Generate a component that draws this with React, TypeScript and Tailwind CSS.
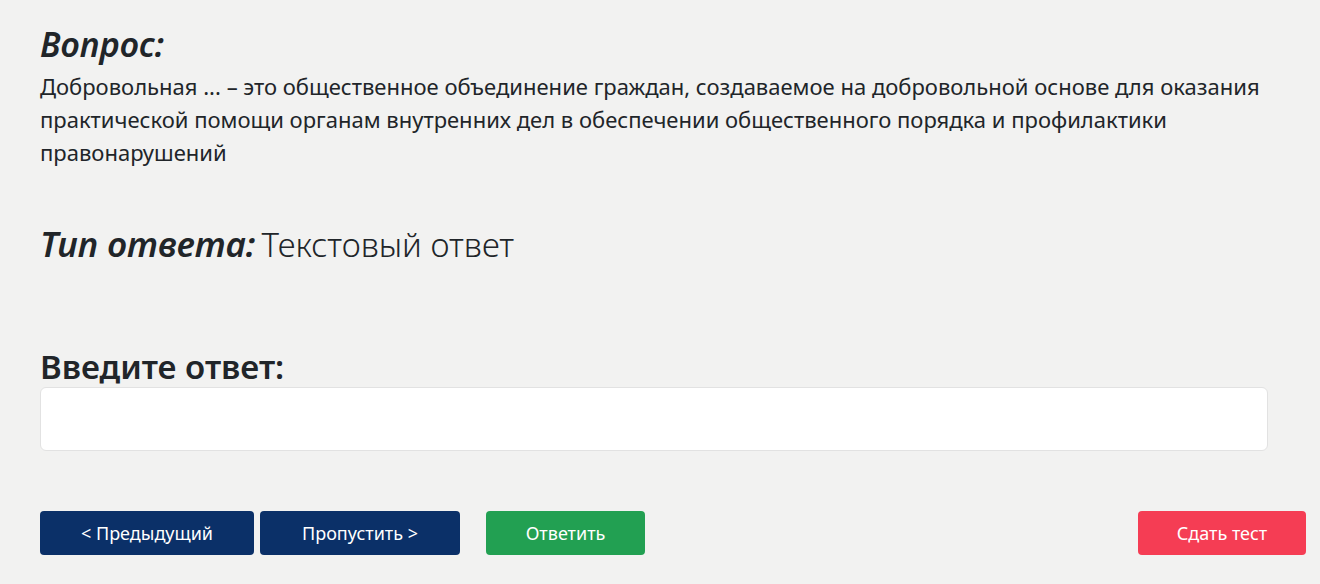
export default function App() {
   return (
      <div
         className="min-h-[584px] w-full bg-[#f2f2f1] text-[#212529]"
         style={{ fontFamily: '"Noto Sans", "Open Sans", sans-serif' }}
      >
         <div className="pl-[40px] pr-[52px] pt-[22px]">
            <h2 className="text-[34px] leading-[44px] font-semibold italic">Вопрос:</h2>
            <p className="text-[22px] leading-[33px] mt-[4px]">
               Добровольная ... – это общественное объединение граждан,
               создаваемое на добровольной основе для оказания практической
               помощи органам внутренних дел в обеспечении общественного порядка
               и профилактики правонарушений
            </p>

            <div className="mt-[53px] flex items-baseline gap-[6px]">
               <span className="text-[35px] leading-[44px] font-semibold italic">
                  Тип ответа:
               </span>
               <span className="text-[33px] leading-[44px] font-light">
                  Текстовый ответ
               </span>
            </div>

            <label className="block mt-[80px] text-[33px] leading-[40px] font-semibold">
               Введите ответ:
            </label>
            <input
               type="text"
               className="block w-full h-[64px] rounded-[6px] border border-[#e2e2e2] bg-white px-3 text-[20px] outline-none"
            />
         </div>

         <div className="flex items-center justify-between pl-[40px] pr-[14px] mt-[60px]">
            <div className="flex items-center">
               <button className="h-[44px] w-[214px] rounded-[4px] bg-[#0b3068] text-white text-[18px]">
                  &lt; Предыдущий
               </button>
               <button className="ml-[6px] h-[44px] w-[200px] rounded-[4px] bg-[#0b3068] text-white text-[18px]">
                  Пропустить &gt;
               </button>
               <button className="ml-[26px] h-[44px] w-[159px] rounded-[4px] bg-[#22a052] text-white text-[18px]">
                  Ответить
               </button>
            </div>
            <button className="h-[44px] w-[168px] rounded-[4px] bg-[#f53d54] text-white text-[18px]">
               Сдать тест
            </button>
         </div>
      </div>
   );
}
